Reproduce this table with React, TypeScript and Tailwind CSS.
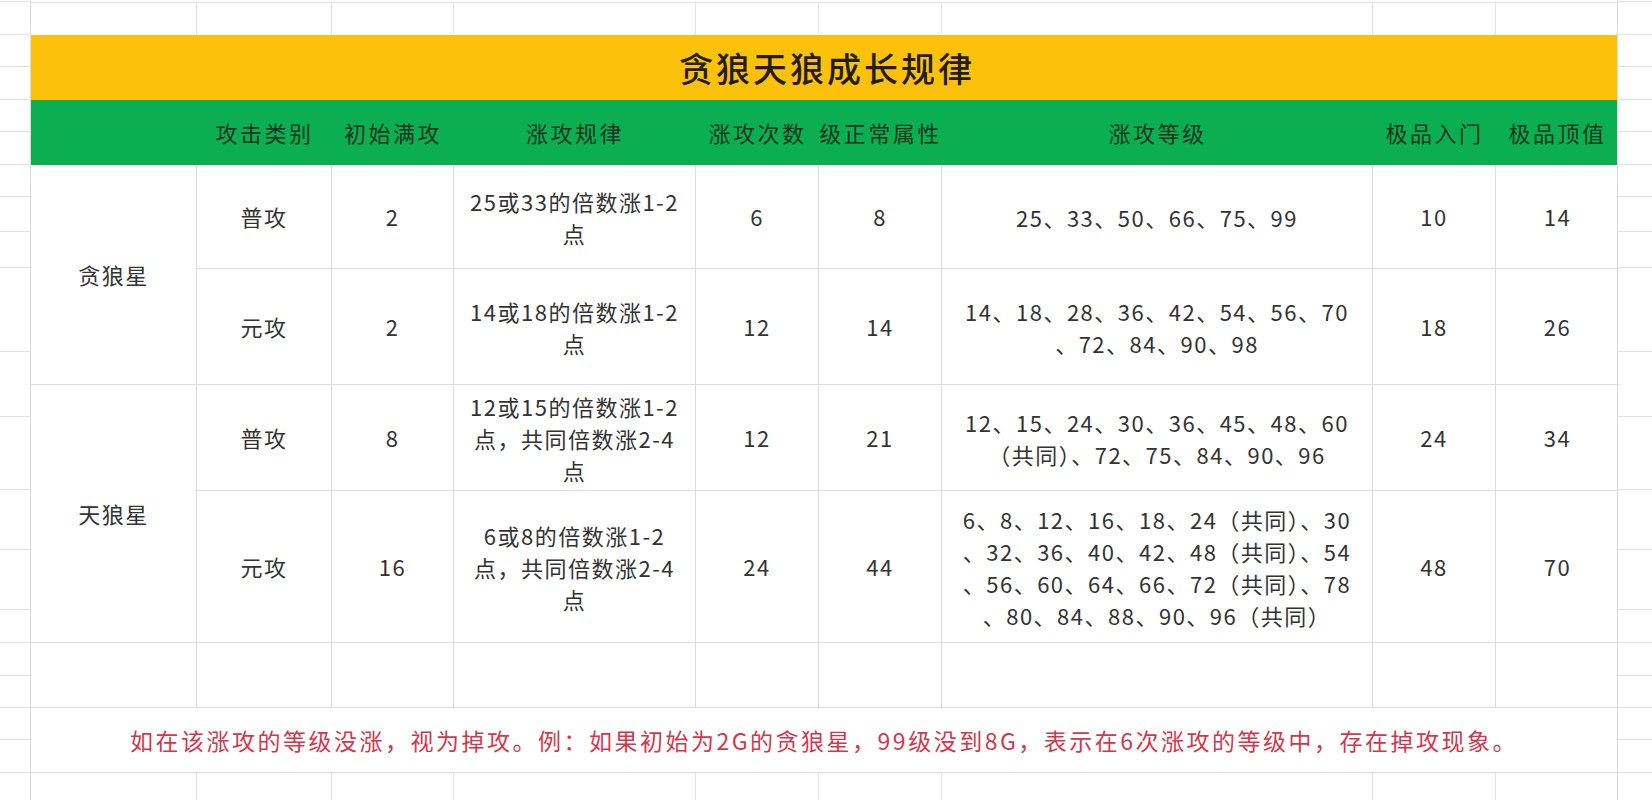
import React from "react";

const FONT = "font-['Noto_Sans_CJK_SC','Noto_Sans',sans-serif]";

const marginLines = [2, 35, 67, 100, 132, 165, 197, 232, 268, 352, 417, 490, 550, 610, 643, 676, 708, 740, 773];

function MarginCol({ width }: { width: string }) {
  const segs: number[] = [];
  let prev = 0;
  for (const y of marginLines) {
    segs.push(y - prev);
    prev = y;
  }
  return (
    <div className={`${width} flex flex-col shrink-0`}>
      {segs.map((h, i) => (
        <div key={i} className="border-b border-[#e2e2e2] box-border" style={{ height: h }} />
      ))}
    </div>
  );
}

const cols = "grid grid-cols-[166px_135px_122px_242px_123px_123px_431px_123px_123px]";

type Row = {
  kind: string;
  init: string;
  rule: string[];
  times: string;
  normal: string;
  levels: string[];
  entry: string;
  top: string;
};

const rows: Row[] = [
  { kind: "普攻", init: "2", rule: ["25或33的倍数涨1-2", "点"], times: "6", normal: "8", levels: ["25、33、50、66、75、99"], entry: "10", top: "14" },
  { kind: "元攻", init: "2", rule: ["14或18的倍数涨1-2", "点"], times: "12", normal: "14", levels: ["14、18、28、36、42、54、56、70", "、72、84、90、98"], entry: "18", top: "26" },
  { kind: "普攻", init: "8", rule: ["12或15的倍数涨1-2", "点，共同倍数涨2-4", "点"], times: "12", normal: "21", levels: ["12、15、24、30、36、45、48、60", "（共同）、72、75、84、90、96"], entry: "24", top: "34" },
  {
    kind: "元攻",
    init: "16",
    rule: ["6或8的倍数涨1-2", "点，共同倍数涨2-4", "点"],
    times: "24",
    normal: "44",
    levels: ["6、8、12、16、18、24（共同）、30", "、32、36、40、42、48（共同）、54", "、56、60、64、66、72（共同）、78", "、80、84、88、90、96（共同）"],
    entry: "48",
    top: "70",
  },
];

const rowStarts = ["row-start-1", "row-start-2", "row-start-3", "row-start-4"];

function Cell({ children, className = "" }: { children?: React.ReactNode; className?: string }) {
  return (
    <div className={`border-r border-b border-[#dcdcdc] flex flex-col items-center justify-center text-center ${className}`}>
      {children}
    </div>
  );
}

function Lines({ lines }: { lines: string[] }) {
  return (
    <>
      {lines.map((l, i) => (
        <div key={i} className="whitespace-nowrap leading-[32px]">
          {l}
        </div>
      ))}
    </>
  );
}

export default function App() {
  return (
    <div className={`w-[1652px] h-[800px] bg-white flex overflow-hidden ${FONT}`}>
      <MarginCol width="w-[30px]" />
      <div className="w-[1588px] shrink-0 flex flex-col border-l border-r border-[#dcdcdc] box-border">
        {/* top strip */}
        <div className={`${cols} h-[35px] shrink-0`}>
          {Array.from({ length: 9 }).map((_, i) => (
            <div key={i} className={`mt-[2px] border-t border-[#e2e2e2] ${i < 8 ? "border-r" : ""} border-[#e2e2e2]`} />
          ))}
        </div>
        {/* title */}
        <div className="h-[65px] shrink-0 bg-[#FCC10A] flex items-center justify-center">
          <span className="text-[34px] font-medium tracking-[3px] text-[#221d10] pl-[6px]">贪狼天狼成长规律</span>
        </div>
        {/* header */}
        <div className={`${cols} h-[65px] shrink-0 bg-[#0BAF51] text-[22px] tracking-[2.5px] font-normal text-[#123520]`}>
          {["", "攻击类别", "初始满攻", "涨攻规律", "涨攻次数", "级正常属性", "涨攻等级", "极品入门", "极品顶值"].map((h, i) => (
            <div key={i} className="flex items-center justify-center whitespace-nowrap">
              {h}
            </div>
          ))}
        </div>
        {/* data */}
        <div className={`${cols} grid-rows-[104px_116px_106px_152px_65px] text-[22px] tracking-[1.5px] text-[#333333] shrink-0`}>
          <Cell className="col-start-1 row-start-1 row-span-2">贪狼星</Cell>
          <Cell className="col-start-1 row-start-3 row-span-2">天狼星</Cell>
          {rows.map((r, i) => (
            <React.Fragment key={i}>
              <Cell className={`col-start-2 ${rowStarts[i]}`}>{r.kind}</Cell>
              <Cell className={`col-start-3 ${rowStarts[i]}`}>{r.init}</Cell>
              <Cell className={`col-start-4 ${rowStarts[i]}`}>
                <Lines lines={r.rule} />
              </Cell>
              <Cell className={`col-start-5 ${rowStarts[i]}`}>{r.times}</Cell>
              <Cell className={`col-start-6 ${rowStarts[i]}`}>{r.normal}</Cell>
              <Cell className={`col-start-7 ${rowStarts[i]}`}>
                <Lines lines={r.levels} />
              </Cell>
              <Cell className={`col-start-8 ${rowStarts[i]}`}>{r.entry}</Cell>
              <Cell className={`col-start-9 ${rowStarts[i]} border-r-0`}>{r.top}</Cell>
            </React.Fragment>
          ))}
          {Array.from({ length: 9 }).map((_, i) => (
            <div key={"e" + i} className={`row-start-5 border-b border-[#dcdcdc] ${i < 8 ? "border-r" : ""}`} />
          ))}
        </div>
        {/* footnote */}
        <div className="h-[65px] shrink-0 border-b border-[#dcdcdc] flex items-center justify-center">
          <span className="text-[23px] tracking-[2.5px] text-[#D4364E] whitespace-nowrap">
            如在该涨攻的等级没涨，视为掉攻。例：如果初始为2G的贪狼星，99级没到8G，表示在6次涨攻的等级中，存在掉攻现象。
          </span>
        </div>
        {/* bottom strip */}
        <div className={`${cols} flex-1`}>
          {Array.from({ length: 9 }).map((_, i) => (
            <div key={i} className={`${i < 8 ? "border-r" : ""} border-[#e2e2e2]`} />
          ))}
        </div>
      </div>
      <MarginCol width="flex-1" />
    </div>
  );
}
